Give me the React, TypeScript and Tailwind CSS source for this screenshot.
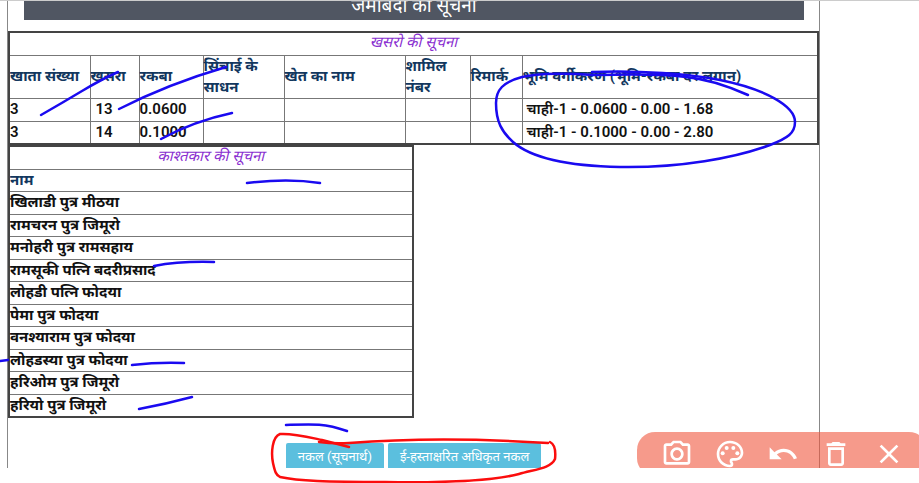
import React from 'react';
import { MdClose, MdDeleteOutline, MdOutlineCameraAlt, MdOutlinePalette, MdUndo } from 'react-icons/md';

const columns = [
  { label: 'खाता संख्या', width: 'w-[81px]' },
  { label: 'खसरा', width: 'w-[49px]' },
  { label: 'रकबा', width: 'w-[64px]' },
  { label: 'सिंचाई के साधन', width: 'w-[81px]' },
  { label: 'खेत का नाम', width: 'w-[121px]' },
  { label: 'शामिल नंबर', width: 'w-[65px]' },
  { label: 'रिमार्क', width: 'w-[52px]' },
  { label: 'भूमि वर्गीकरण (भूमि-रकबा दर लगान)', width: '' },
];

const plots = [
  { khata: '3', khasra: '13', area: '0.0600', land: 'चाही-1 - 0.0600 - 0.00 - 1.68' },
  { khata: '3', khasra: '14', area: '0.1000', land: 'चाही-1 - 0.1000 - 0.00 - 2.80' },
];

const owners = [
  'खिलाडी पुत्र मीठया',
  'रामचरन पुत्र जिमूरो',
  'मनोहरी पुत्र रामसहाय',
  'रामसूकी पत्नि बदरीप्रसाद',
  'लोहडी पत्नि फोदया',
  'पेमा पुत्र फोदया',
  'वनश्याराम पुत्र फोदया',
  'लोहडस्या पुत्र फोदया',
  'हरिओम पुत्र जिमूरो',
  'हरियो पुत्र जिमूरो',
];

const tools = [
  { label: 'Camera', Icon: MdOutlineCameraAlt },
  { label: 'Palette', Icon: MdOutlinePalette },
  { label: 'Undo', Icon: MdUndo },
  { label: 'Delete', Icon: MdDeleteOutline },
  { label: 'Close', Icon: MdClose },
];

const cell = 'border border-[#777] p-0';
const caption = "text-center font-['Noto_Sans_Devanagari',sans-serif] font-normal italic text-[#8a2fd0]";

const PlotTable: React.FC = () => (
  <table className="w-full table-fixed border-collapse border-2 border-[#444] text-left">
    <colgroup>
      {columns.map((column) => (
        <col key={column.label} className={column.width} />
      ))}
    </colgroup>
    <thead>
      <tr className="h-[23px]">
        <th colSpan={8} className={`${cell} ${caption}`}>खसरो की सूचना</th>
      </tr>
      <tr className="h-[43px] text-[#12375e]">
        {columns.map((column) => (
          <th key={column.label} className={`${cell} font-bold`}>{column.label}</th>
        ))}
      </tr>
    </thead>
    <tbody>
      {plots.map((plot) => (
        <tr key={plot.khasra} className="h-[23px]">
          <td className={cell}>{plot.khata}</td>
          <td className={`${cell} pl-[5px]`}>{plot.khasra}</td>
          <td className={cell}>{plot.area}</td>
          <td className={cell} />
          <td className={cell} />
          <td className={cell} />
          <td className={cell} />
          <td className={`${cell} pl-1`}>{plot.land}</td>
        </tr>
      ))}
    </tbody>
  </table>
);

const OwnerTable: React.FC = () => (
  <table className="w-1/2 border-collapse border-2 border-[#444] text-left">
    <thead>
      <tr className="h-[23px]">
        <th className={`${cell} ${caption}`}>काश्तकार की सूचना</th>
      </tr>
      <tr className="h-[22px]">
        <th className={`${cell} font-bold text-[#12375e]`}>नाम</th>
      </tr>
    </thead>
    <tbody className="font-bold">
      {owners.map((owner) => (
        <tr key={owner} className="odd:h-[23px] even:h-[22px]">
          <td className={cell}>{owner}</td>
        </tr>
      ))}
    </tbody>
  </table>
);

// Freehand pen strokes drawn over the page
const PenMarks: React.FC = () => (
  <svg className="pointer-events-none absolute left-0 top-0" width="919" height="483" fill="none" strokeLinecap="round" strokeLinejoin="round">
    <g stroke="#1a0af0" strokeWidth="2.5">
      <path d="M41 115 Q62 103 82 91 T118 72" />
      <path d="M119 109 Q168 84 226 67" />
      <path d="M161 139 Q194 121 232 113" />
      <path d="M247 183 Q288 178 320 183" />
      <path d="M154 266 Q180 261 214 262" />
      <path d="M0 361 L8 360" />
      <path d="M132 365 Q158 362 184 363" />
      <path d="M139 409 Q166 404 192 397" />
      <path d="M286 425 C312 424 324 423 347 431" />
      <path d="M748 95 C728 86 706 79 686 77 C650 73 620 75 592 75" />
      <path d="M592 75 C570 73 540 73 522 77 C503 82 496 90 496 103 C496 122 502 132 513 142 C530 157 565 166 620 167 C680 168 735 158 770 145 C788 138 795 133 795 122 C795 106 765 89 720 80 C690 74 640 70 592 72" />
    </g>
    <g stroke="#fb0d0d" strokeWidth="2.5">
      <path d="M349 447 L322 440 C308 437 292 433 280 434 C272 437 271 453 273 463 C275 472 276 475 280 477 C298 481 326 482 385 482 C446 483 496 480 519 474 C537 469 551 468 555 459 C556 450 554 444 550 442" />
      <path d="M319 442 Q334 444 349 443 C400 439 470 438 548 443" />
    </g>
  </svg>
);

const App: React.FC = () => {
  return (
    <div className="relative h-screen overflow-hidden bg-white pb-[15px] font-['Roboto','Noto_Sans_Devanagari',sans-serif] text-[15px] leading-[21px] text-[#111]">
      <div className="relative h-full overflow-hidden border-t border-[#ccc]">
        <main className="mr-[99px] ml-[7px] h-full border-x border-[#888]">
          <header className="mr-[15px] ml-4 flex h-[19px] items-end justify-center overflow-hidden bg-[#505662]">
            <h1 className="text-[19px] leading-7 text-white">जमाबंदी की सूचना</h1>
          </header>
          <div className="pt-[11px] font-semibold">
            <PlotTable />
            <OwnerTable />
          </div>
          <div className="mt-[25px] flex justify-center gap-1 text-[13px] leading-5 text-white">
            <button type="button" className="rounded-t-xs bg-[#5bbfde] px-3 py-1">नकल (सूचनार्थ)</button>
            <button type="button" className="rounded-t-xs bg-[#5bbfde] px-3 py-1">ई-हस्ताक्षरित अधिकृत नकल</button>
          </div>
        </main>
        <div className="absolute -right-2 -bottom-2 flex h-11 w-[290px] items-center gap-[21px] rounded-[18px] bg-[#f0573e]/60 pl-6 text-white">
          {tools.map(({ label, Icon }) => (
            <button key={label} type="button" aria-label={label}>
              <Icon size={32} />
            </button>
          ))}
        </div>
      </div>
      <PenMarks />
    </div>
  );
};

export default App;
